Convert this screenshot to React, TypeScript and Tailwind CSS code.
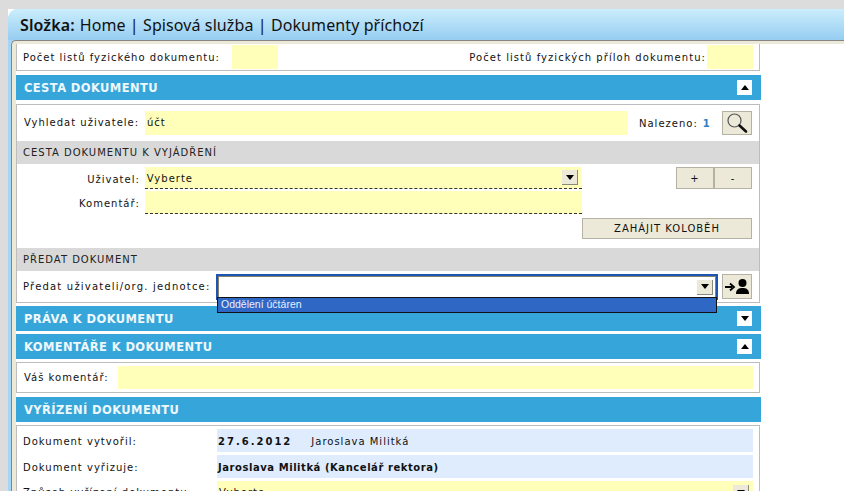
const Arrow = ({ up = false }: { up?: boolean }) => (
  <svg width="8" height="5" viewBox="0 0 8 5" className="block">
    <path d={up ? "M4 0 L8 5 L0 5 Z" : "M0 0 L8 0 L4 5 Z"} fill="#000" />
  </svg>
);

const SectionHeader = ({ title, up, toggle = true }: { title: string; up?: boolean; toggle?: boolean }) => (
  <div className="flex h-[25px] w-[745px] items-center justify-between bg-[#36a6da] pl-2 pr-[9px]">
    <span className="pt-[2px] font-['DejaVu_Sans',sans-serif] text-[11.5px] font-bold tracking-[0.4px] text-[#eef8fd]">{title}</span>
    {toggle && (
      <span className="flex h-[15px] w-[15px] items-center justify-center bg-white">
        <Arrow up={up} />
      </span>
    )}
  </div>
);

const Box = ({ className, children }: { className: string; children: React.ReactNode }) => (
  <div className={`w-[744px] border border-[#bdbdbd] bg-white ${className}`}>{children}</div>
);

const Band = ({ title }: { title: string }) => (
  <div className="flex h-[23px] items-center bg-[#d9d9d9] pl-[6px] text-[10px] tracking-[1px] text-[#222]">{title}</div>
);

const SelectArrow = () => (
  <span className="flex h-[15px] w-[16px] items-center justify-center border-r border-b border-[#8a8a7a] bg-[#ece9d8]">
    <Arrow />
  </span>
);

const FlatButton = ({ className, children }: { className: string; children: React.ReactNode }) => (
  <div className={`flex items-center justify-center border border-[#b5b2a4] bg-[#ece9d8] text-[10px] tracking-[1px] text-[#111] ${className}`}>
    {children}
  </div>
);

export default function App() {
  return (
    <div className="relative h-[491px] w-[844px] overflow-hidden bg-white font-['DejaVu_Sans',sans-serif] text-[#111]">
      <div className="h-[9px] bg-[#dcdcdc]" />
      <div className="flex h-[482px]">
        <div className="w-[8px] bg-[#dcdcdc]" />
        <div className="flex-1 rounded-tl-[10px] bg-[#a6d6f5]">
          <div className="flex h-[31px] items-center rounded-tl-[10px] bg-gradient-to-b from-[#cbeefc] to-[#96cdf1] pl-[12px] font-['Noto_Sans',sans-serif] text-[16px] leading-none tracking-[0.1px] text-[#111]">
            <span className="font-semibold">Složka:</span>
            <span className="ml-[5px]">Home | Spisová služba | Dokumenty příchozí</span>
          </div>
          <div className="ml-[3px] h-full rounded-tl-[5px] border-t border-l border-[#858585] bg-[#ece9d8] pl-[4px] pt-[3px]">
            <div className="h-full bg-white">
              {/* pocet listu */}
              <Box className="flex h-[27px] items-center border-t-0 pl-[6px] pr-[6px] text-[10px] tracking-[1px]">
                <span>Počet listů fyzického dokumentu:</span>
                <div className="ml-[12px] h-[24px] w-[46px] bg-[#ffffb9]" />
                <span className="ml-auto mr-[1px] tracking-[1.05px]">Počet listů fyzických příloh dokumentu:</span>
                <div className="h-[24px] w-[46px] bg-[#ffffb9]" />
              </Box>

              <div className="mt-[4px]">
                <SectionHeader title="CESTA DOKUMENTU" up />
              </div>

              <Box className="relative mt-[4px] h-[199px] text-[10px] tracking-[1px]">
                <div className="flex h-[36px] items-center pl-[7px] pr-[7px]">
                  <span className="w-[121px] pb-[2px]">Vyhledat uživatele:</span>
                  <div className="flex h-[24px] w-[483px] items-center bg-[#ffffb9] pb-[2px] pl-[2px]">účt</div>
                  <span className="ml-[11px]">Nalezeno:</span>
                  <span className="ml-[5px] font-bold text-[#2f80c2]">1</span>
                  <FlatButton className="ml-auto h-[24px] w-[30px]">
                    <svg width="24" height="22" viewBox="0 0 24 22">
                      <circle cx="9.5" cy="8.5" r="6.5" fill="none" stroke="#555" strokeWidth="1.2" />
                      <path d="M14.5 13.5 L21 19.5" stroke="#111" strokeWidth="2.6" strokeLinecap="round" />
                    </svg>
                  </FlatButton>
                </div>
                <Band title="CESTA DOKUMENTU K VYJÁDŘENÍ" />
                <div className="flex h-[84px] pl-[7px] pr-[7px] pt-[3px]">
                  <div className="w-[121px] pr-[5px] text-right">
                    <div className="flex h-[24px] items-center justify-end">Uživatel:</div>
                    <div className="flex h-[24px] items-center justify-end">Komentář:</div>
                  </div>
                  <div className="w-[438px]">
                    <div className="flex h-[22px] items-center justify-between border-b border-dashed border-[#333] bg-[#ffffb9] pl-[2px] pr-[4px]">
                      <span className="pt-[2px]">Vyberte</span>
                      <SelectArrow />
                    </div>
                    <div className="mt-[2px] h-[23px] border-b border-dashed border-[#333] bg-[#ffffb9]" />
                  </div>
                  <div className="flex flex-1 flex-col items-end">
                    <div className="flex">
                      <FlatButton className="h-[22px] w-[38px]">+</FlatButton>
                      <FlatButton className="h-[22px] w-[38px]">-</FlatButton>
                    </div>
                    <FlatButton className="ml-auto mt-[29px] h-[21px] w-[170px] whitespace-nowrap">ZAHÁJIT KOLOBĚH</FlatButton>
                  </div>
                </div>
                <Band title="PŘEDAT DOKUMENT" />
                <div className="flex h-[31px] items-center pl-[6px] pr-[7px]">
                  <span className="w-[193px] tracking-[1.2px]">Předat uživateli/org. jednotce:</span>
                  <div className="flex h-[26px] w-[502px] border-2 border-[#1d55b4]">
                    <div className="flex flex-1 items-center justify-end border border-b-0 border-[#86826a] bg-white pr-[2px]">
                      <SelectArrow />
                    </div>
                  </div>
                  <FlatButton className="ml-auto h-[25px] w-[30px]">
                    <svg width="28" height="18" viewBox="0 0 28 18">
                      <path d="M2 9 H9 M7 5.5 L11 9 L7 12.5" fill="none" stroke="#000" strokeWidth="1.8" />
                      <circle cx="19.5" cy="5" r="4" fill="#000" />
                      <path d="M13 16 C13 11 16 10 19.5 10 C23 10 26 11 26 16 Z" fill="#000" />
                    </svg>
                  </FlatButton>
                </div>
                {/* dropdown list of the focused select */}
                <div className="absolute left-[200px] top-[192px] z-10 flex h-[16px] w-[500px] items-center border border-[#111] bg-[#2f67c5] pl-[3px] font-['Liberation_Sans',sans-serif] text-[10.5px] tracking-normal text-[#e8f0ff]">
                  Oddělení účtáren
                </div>
              </Box>

              <div className="mt-[3px]">
                <SectionHeader title="PRÁVA K DOKUMENTU" />
              </div>
              <div className="mt-[3px]">
                <SectionHeader title="KOMENTÁŘE K DOKUMENTU" up />
              </div>
              <Box className="mt-[3px] flex h-[31px] items-center pl-[7px] pr-[6px] text-[10px] tracking-[1px]">
                <span className="w-[94px]">Váš komentář:</span>
                <div className="h-[23px] flex-1 bg-[#ffffb9]" />
              </Box>
              <div className="mt-[4px]">
                <SectionHeader title="VYŘÍZENÍ DOKUMENTU" toggle={false} />
              </div>
              <Box className="mt-[3px] h-[80px] pl-[6px] pr-[6px] pt-[3px] text-[10px] tracking-[1px]">
                <div className="flex h-[23px] items-center">
                  <span className="w-[194px] pt-[2px]">Dokument vytvořil:</span>
                  <div className="flex h-full flex-1 items-center bg-[#deecfd] pl-[1px] pt-[2px]">
                    <b className="tracking-[2px]">27.6.2012</b>
                    <span className="ml-[19px]">Jaroslava Militká</span>
                  </div>
                </div>
                <div className="mt-[3px] flex h-[23px] items-center">
                  <span className="w-[194px] pt-[2px]">Dokument vyřizuje:</span>
                  <b className="flex h-full flex-1 items-center bg-[#deecfd] pl-[1px] pt-[2px] tracking-[0.55px]">Jaroslava Militká (Kancelář rektora)</b>
                </div>
                <div className="mt-[3px] flex h-[23px] items-center">
                  <span className="w-[194px]">Způsob vyřízení dokumentu:</span>
                  <div className="flex h-full flex-1 items-center justify-between bg-[#ffffb9] pl-[2px] pr-[4px]">
                    Vyberte
                    <SelectArrow />
                  </div>
                </div>
              </Box>
            </div>
          </div>
        </div>
      </div>
    </div>
  );
}
